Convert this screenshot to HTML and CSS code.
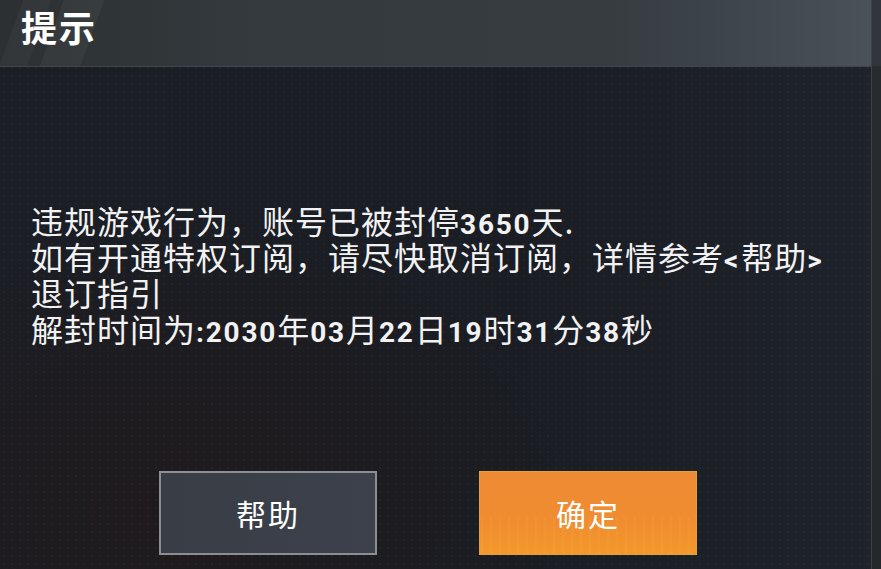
FILE: index.html
```html
<!DOCTYPE html>
<html lang="zh">
<head>
    <meta charset="UTF-8">
    <title>提示</title>
    <link rel="stylesheet" href="styles.css">
</head>
<body>
    <div class="screen">
        <div class="dialog">
            <div class="dialog-header">
                <div class="dialog-title">提示</div>
            </div>
            <div class="dialog-body">
                <div class="message">
                    <div class="line">违规游戏行为，账号已被封停<span class="num">3650</span>天.</div>
                    <div class="line">如有开通特权订阅，请尽快取消订阅，详情参考<span class="num br">&lt;</span>帮助<span class="num br">&gt;</span></div>
                    <div class="line">退订指引</div>
                    <div class="line">解封时间为<span class="num">:2030</span>年<span class="num">03</span>月<span class="num">22</span>日<span class="num">19</span>时<span class="num">31</span>分<span class="num">38</span>秒</div>
                </div>
                <div class="button-row">
                    <button class="btn btn-help">帮助</button>
                    <button class="btn btn-ok">确定</button>
                </div>
            </div>
        </div>
        <div class="edge"></div>
    </div>
</body>
</html>
```

FILE: styles.css
```css
html, body {
    margin: 0;
    padding: 0;
    height: 100%;
    background: #1b1e24;
}
body {
    width: 881px;
    height: 569px;
    overflow: hidden;
    font-family: "Noto Sans CJK SC", "Noto Sans", sans-serif;
    color: #f2f2f2;
}
.screen {
    display: flex;
    height: 569px;
}
.dialog {
    width: 872px;
    display: flex;
    flex-direction: column;
    background:
        radial-gradient(circle, rgba(255,255,255,0.035) 1px, transparent 1.5px) 0 0 / 8px 8px,
        radial-gradient(ellipse at 20% 90%, #1f1a1c 0%, transparent 40%),
        linear-gradient(90deg, #1b1e25 0%, #1a1d23 60%, #1e222a 100%);
}
/* Header bar with slanted stripes on the left */
.dialog-header {
    height: 66px;
    border-bottom: 1px solid #40474c;
    background:
        linear-gradient(110deg, transparent 0px, transparent 22px, rgba(255,255,255,0.03) 22px, rgba(255,255,255,0.03) 48px, transparent 48px, transparent 60px, rgba(255,255,255,0.04) 60px, rgba(255,255,255,0.04) 98px, transparent 98px),
        linear-gradient(90deg, #2c3033 0%, #343a3d 30%, #363c40 70%, #3f464c 85%, #4a5258 100%);
    display: flex;
    align-items: center;
}
.dialog-title {
    margin-left: 21px;
    margin-top: -14px;
    font-size: 36px;
    font-weight: 700;
    letter-spacing: 2px;
    color: #ffffff;
}
.dialog-body {
    flex: 1;
    display: flex;
    flex-direction: column;
    padding: 135px 0 0 31px;
}
.message {
    font-size: 32px;
    line-height: 36px;
    letter-spacing: 1px;
}
.line {
    height: 36px;
    white-space: nowrap;
}
.num {
    font-family: "Roboto", "Noto Sans", sans-serif;
    font-size: 28px;
    line-height: 36px;
    font-weight: 700;
    letter-spacing: 1.8px;
}
.num.br {
    font-weight: 700;
    letter-spacing: 3px;
}
.button-row {
    display: flex;
    gap: 102px;
    margin-top: 125px;
    padding-left: 128px;
}
.btn {
    width: 218px;
    height: 84px;
    box-sizing: border-box;
    font-family: "Noto Sans CJK SC", sans-serif;
    font-size: 30px;
    letter-spacing: 2px;
    color: #ffffff;
    cursor: pointer;
    padding: 0;
}
.btn-help {
    background: linear-gradient(90deg, #393d46, #3d414b);
    border: 2px solid #8b8e93;
}
.btn-ok {
    background:
        repeating-linear-gradient(90deg, rgba(255,210,80,0) 0px, rgba(255,200,70,0.12) 2px, rgba(255,210,80,0) 4px, rgba(255,210,80,0) 9px) 0 100% / 100% 45% no-repeat,
        linear-gradient(180deg, #ee8a33 0%, #f08c30 60%, #f3982c 100%);
    border: 1px solid #e0a33c;
}
.edge {
    width: 9px;
    background: linear-gradient(180deg, #30363b 0px, #30363b 66px, #272a2e 67px, #24272b 100%);
    border-left: 1px solid #3c4247;
}
```
